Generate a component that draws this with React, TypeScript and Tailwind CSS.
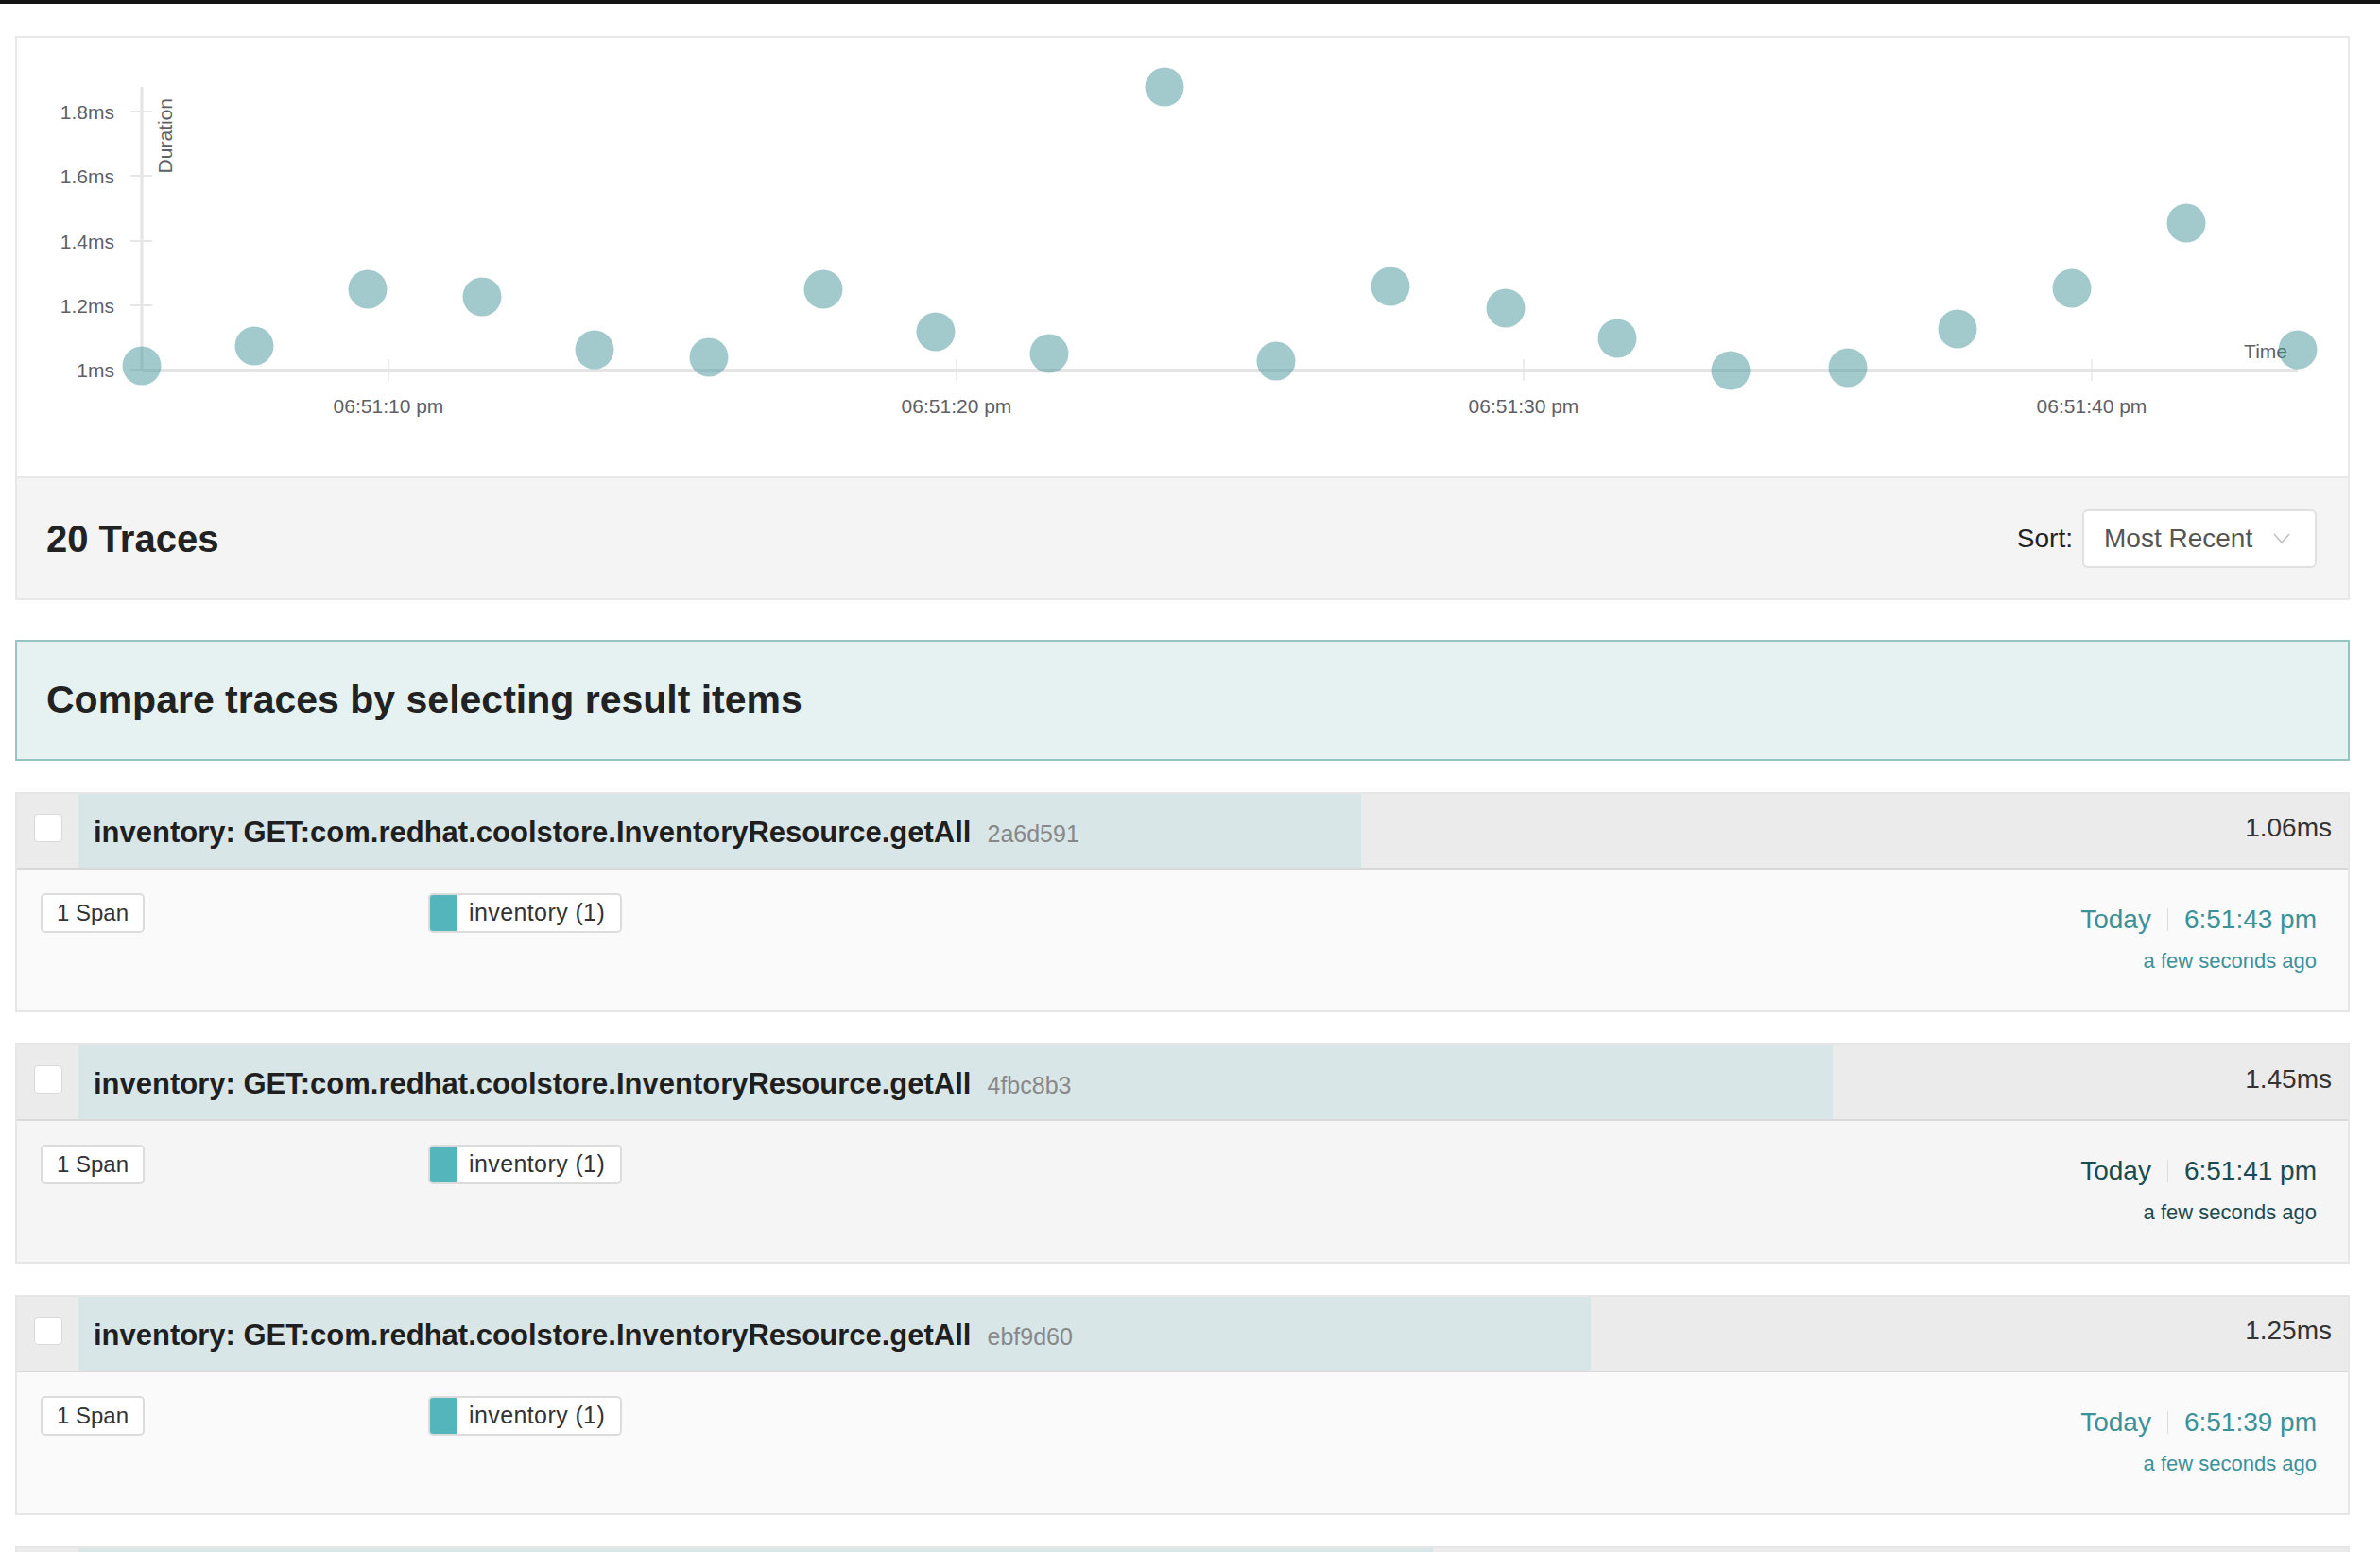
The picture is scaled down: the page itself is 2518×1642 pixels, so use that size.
import React from "react";

type Trace = {
  id: string;
  duration: number;
  time: string;
  hovered?: boolean;
};

const MAX_DURATION = 1.876;

const traces: Trace[] = [
  { id: "2a6d591", duration: 1.06, time: "6:51:43 pm" },
  { id: "4fbc8b3", duration: 1.45, time: "6:51:41 pm", hovered: true },
  { id: "ebf9d60", duration: 1.25, time: "6:51:39 pm" },
  { id: "9c41e2a", duration: 1.12, time: "6:51:37 pm" },
];

// dot centres in page pixels (x, y)
const dots: [number, number][] = [
  [150, 387],
  [269, 366],
  [389, 306],
  [510, 314],
  [629, 370],
  [750, 378],
  [871, 306],
  [990, 351],
  [1110, 374],
  [1232, 92],
  [1350, 382],
  [1471, 303],
  [1593, 326],
  [1711, 358],
  [1831, 392],
  [1955, 389],
  [2071, 348],
  [2192, 305],
  [2313, 236],
  [2431, 370],
];

const yTicks = [
  { label: "1.8ms", y: 118 },
  { label: "1.6ms", y: 186 },
  { label: "1.4ms", y: 255 },
  { label: "1.2ms", y: 323 },
  { label: "1ms", y: 391 },
];

const xTicks = [
  { label: "06:51:10 pm", x: 411 },
  { label: "06:51:20 pm", x: 1012 },
  { label: "06:51:30 pm", x: 1612 },
  { label: "06:51:40 pm", x: 2213 },
];

const ScatterPlot = () => {
  const font = "Liberation Sans, Arial, sans-serif";
  return (
    <svg
      className="block w-full h-[464px]"
      viewBox="18 40 2466 464"
      preserveAspectRatio="none"
    >
      {/* y axis */}
      <line x1={150} y1={92} x2={150} y2={392} stroke="#e4e4e4" strokeWidth={3} />
      {yTicks.map((t) => (
        <g key={t.label}>
          <line x1={138} y1={t.y} x2={161} y2={t.y} stroke="#e6e6e6" strokeWidth={2} />
          <text
            x={121}
            y={t.y}
            textAnchor="end"
            dominantBaseline="central"
            fontSize={21}
            fill="#5f5f66"
            fontFamily={font}
          >
            {t.label}
          </text>
        </g>
      ))}
      <text
        transform="translate(182,104) rotate(-90)"
        textAnchor="end"
        fontSize={21}
        fill="#5f5f66"
        fontFamily={font}
      >
        Duration
      </text>

      {/* x axis */}
      <line x1={150} y1={392} x2={2431} y2={392} stroke="#e4e4e4" strokeWidth={4} />
      {xTicks.map((t) => (
        <g key={t.label}>
          <line x1={t.x} y1={380} x2={t.x} y2={403} stroke="#e6e6e6" strokeWidth={1.5} />
          <text
            x={t.x}
            y={429}
            textAnchor="middle"
            dominantBaseline="central"
            fontSize={21}
            fill="#5f5f66"
            fontFamily={font}
          >
            {t.label}
          </text>
        </g>
      ))}
      <text x={2420} y={379} textAnchor="end" fontSize={21} fill="#5f5f66" fontFamily={font}>
        Time
      </text>

      {dots.map(([x, y], i) => (
        <circle key={i} cx={x} cy={y} r={20.5} fill="#459399" fillOpacity={0.5} />
      ))}
    </svg>
  );
};

const TraceRow = ({ trace }: { trace: Trace }) => {
  const timeColor = trace.hovered ? "text-[#1b4b51]" : "text-[#3d9199]";
  return (
    <div className="border-2 border-[#e6e6e6] h-[233px] mb-[33px] flex flex-col">
      <div className="flex h-[80px] bg-[#ebebeb] border-b-2 border-[#d9d9d9]">
        <div className="w-[65px] flex justify-center pt-[21px]">
          <div className="w-[30px] h-[30px] rounded-[4px] bg-white border border-[#d9d9d9]" />
        </div>
        <div className="relative flex-1 flex items-center justify-between">
          <div
            className="absolute inset-y-0 left-0 bg-[#d9e6e8]"
            style={{ width: `${(trace.duration / MAX_DURATION) * 100}%` }}
          />
          <div className="relative flex items-baseline pl-[16px] pt-[4px]">
            <span className="text-[31px] font-bold text-[#1f1f1f]">
              inventory: GET:com.redhat.coolstore.InventoryResource.getAll
            </span>
            <span className="ml-[17px] text-[25px] text-[#888888]">{trace.id}</span>
          </div>
          <span className="relative pr-[17px] text-[28px] text-[#333333] -mt-[6px]">
            {trace.duration.toFixed(2)}ms
          </span>
        </div>
      </div>
      <div
        className={`flex-1 flex justify-between ${trace.hovered ? "bg-[#f5f5f5]" : "bg-[#fafafa]"}`}
      >
        <div className="flex items-start pl-[25px] pt-[25px]">
          <div className="w-[410px]">
            <span className="inline-flex items-center h-[42px] px-[15px] bg-white border-2 border-[#dcdcdc] rounded-[5px] text-[24px] text-[#333333]">
              1 Span
            </span>
          </div>
          <span className="inline-flex items-stretch h-[42px] bg-white border-2 border-[#dcdcdc] rounded-[5px] overflow-hidden">
            <span className="w-[28px] bg-[#54b5bc]" />
            <span className="flex items-center pl-[13px] pr-[16px] text-[25px] tracking-[0.4px] text-[#333333]">
              inventory (1)
            </span>
          </span>
        </div>
        <div className={`flex flex-col items-end pr-[33px] pt-[36px] ${timeColor}`}>
          <div className="flex items-center text-[28px] leading-[34px]">
            <span>Today</span>
            <span className="w-px h-[24px] bg-[#dcdcdc] mx-[17px]" />
            <span>{trace.time}</span>
          </div>
          <div className="mt-[13px] text-[22px] leading-[28px]">a few seconds ago</div>
        </div>
      </div>
    </div>
  );
};

export default function App() {
  return (
    <div className="min-h-screen bg-white font-['Liberation_Sans',Arial,sans-serif] text-[#222222]">
      <div className="h-[4px] bg-[#141414]" />
      <div className="pl-4 pr-8 pt-[34px]">
        <div className="border-2 border-[#e8e8e8]">
          <ScatterPlot />
          <div className="h-[129px] bg-[#f4f4f4] border-t-2 border-[#e8e8e8] flex items-center justify-between pl-[31px] pr-[33px]">
            <h2 className="text-[40px] font-bold text-[#222222]">20 Traces</h2>
            <div className="flex items-center">
              <span className="text-[28px] text-[#222222] mr-[10px]">Sort:</span>
              <div className="w-[248px] h-[62px] bg-white border-2 border-[#e0e0e0] rounded-[6px] flex items-center pl-[21px] pr-[26px] justify-between">
                <span className="text-[28px] text-[#555555]">Most Recent</span>
                <svg width="18" height="11" viewBox="0 0 18 11">
                  <polyline points="1,1 9,10 17,1" fill="none" stroke="#bdbdbd" strokeWidth="1.5" />
                </svg>
              </div>
            </div>
          </div>
        </div>

        <div className="mt-[42px] h-[128px] border-2 border-[#94c4c4] bg-[#e6f2f2] flex items-center pl-[31px]">
          <h2 className="text-[41px] font-bold text-[#222222]">
            Compare traces by selecting result items
          </h2>
        </div>

        <div className="mt-[33px]">
          {traces.map((t) => (
            <TraceRow key={t.id} trace={t} />
          ))}
        </div>
      </div>
    </div>
  );
}
